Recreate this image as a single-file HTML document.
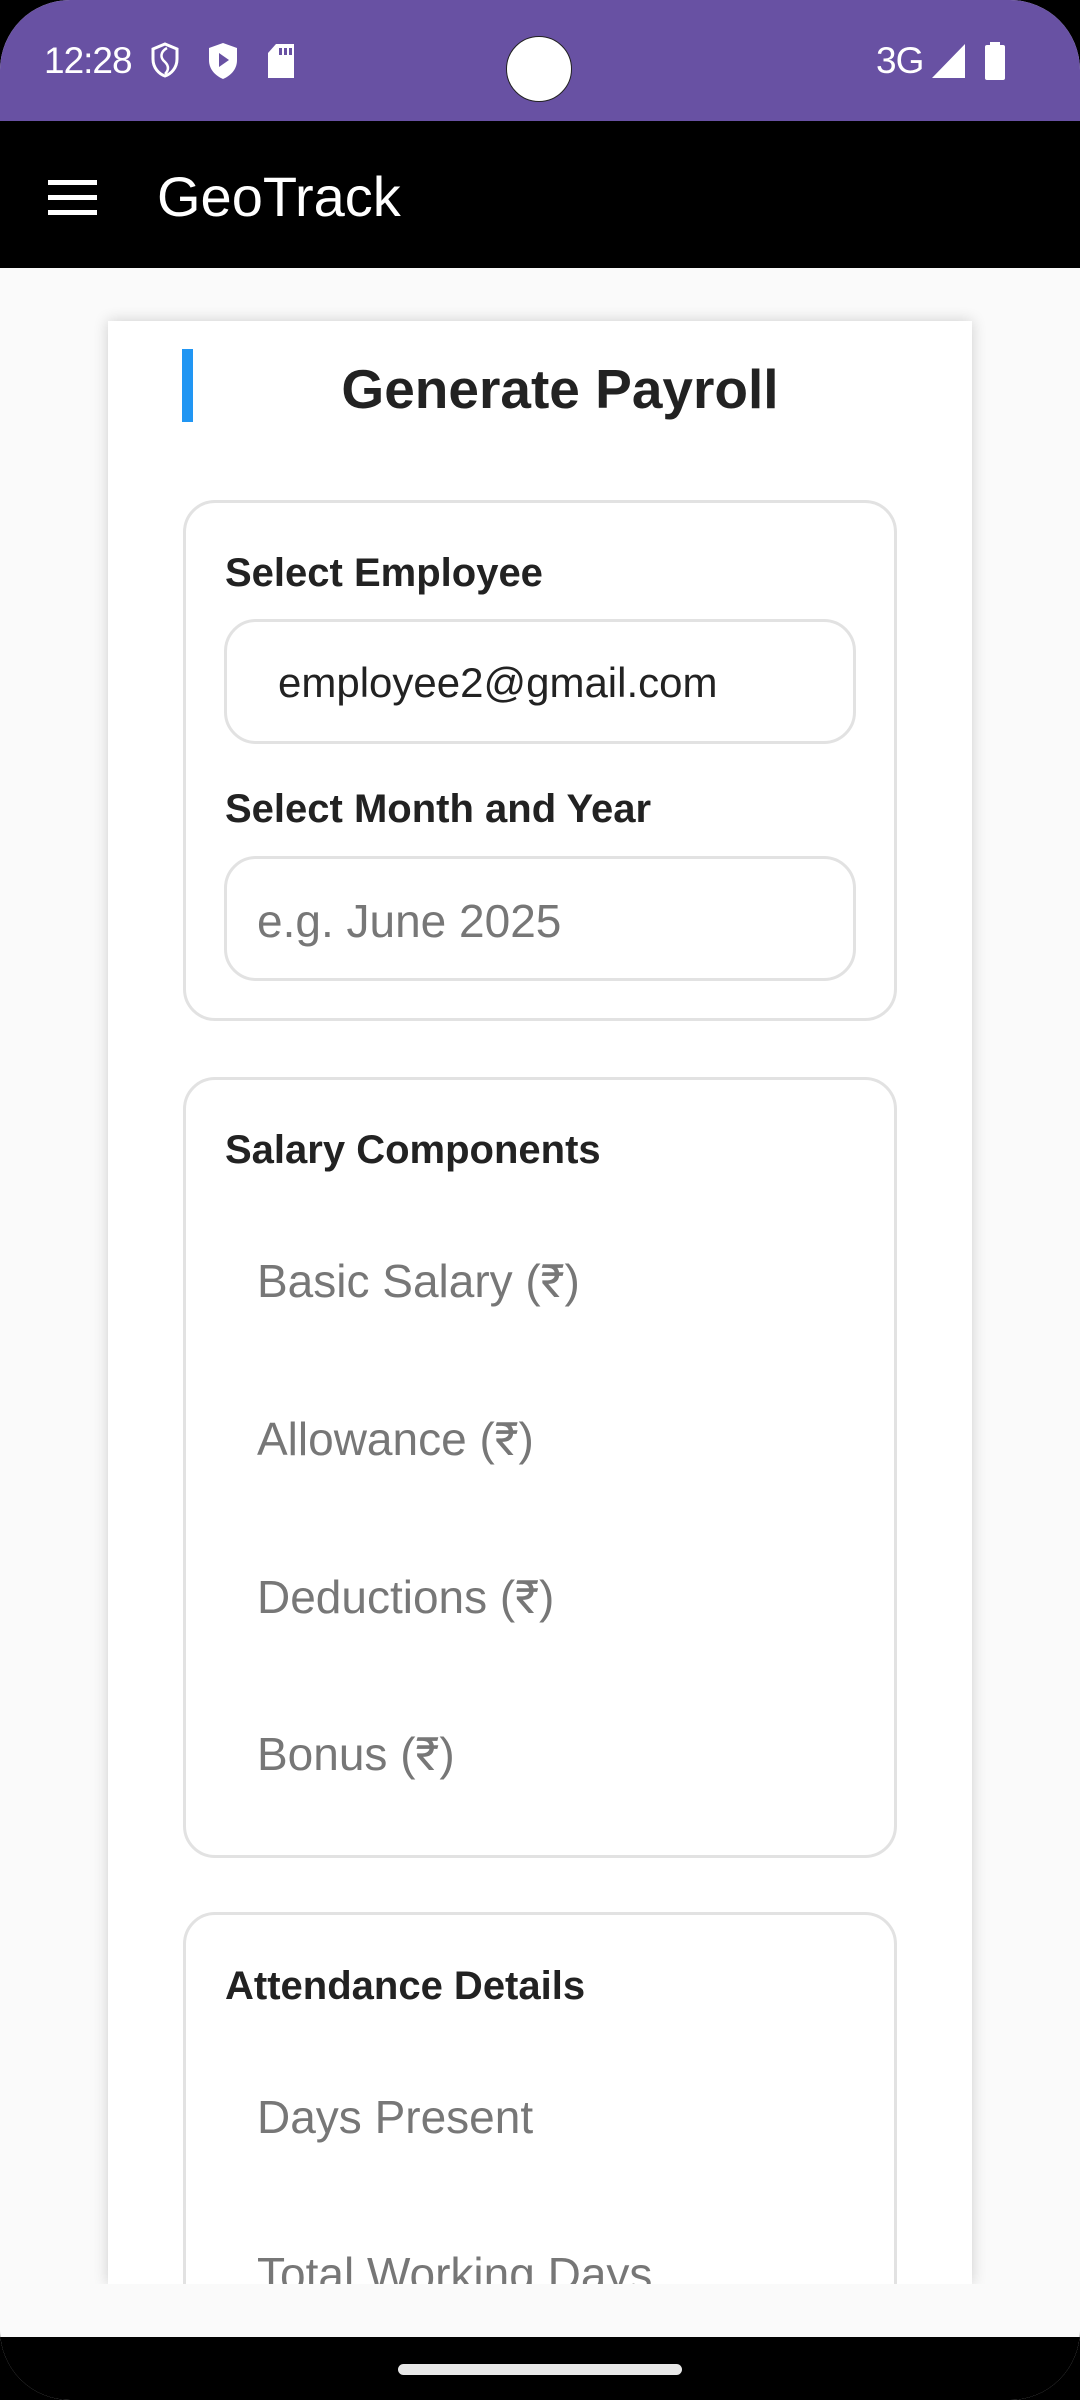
<!DOCTYPE html>
<html><head><meta charset="utf-8"><style>
html,body{margin:0;padding:0;width:1080px;height:2400px;overflow:hidden;background:#000;font-family:"Liberation Sans",Roboto,sans-serif}
.screen{position:absolute;left:0;top:0;width:1080px;height:2400px;background:#fafafa;border-radius:70px 70px 70px 70px;overflow:hidden}
.status{position:absolute;left:0;top:0;width:1080px;height:121px;background:#6851a3;color:#fff}
.time{position:absolute;left:44px;top:40px;font-size:37px;letter-spacing:-1px}
.cam{position:absolute;left:506px;top:36px;width:66px;height:66px;border-radius:50%;background:#fff;border:1px solid #222;box-sizing:border-box}
.bar{position:absolute;left:0;top:121px;width:1080px;height:147px;background:#000;color:#fff}
.bar .t{position:absolute;left:157px;top:43px;font-size:56px}
.ham{position:absolute;left:48px;width:49px;height:5px;background:#fff}
.card{position:absolute;left:108px;top:321px;width:864px;height:1963px;background:#fff;box-shadow:0 0 14px rgba(0,0,0,0.18)}
.blue{position:absolute;left:182px;top:349px;width:11px;height:73px;background:#2196f3}
.title{position:absolute;left:0;width:1080px;top:357px;text-align:center;font-size:55px;font-weight:bold;color:#222;padding-left:40px;box-sizing:border-box}
.sec{position:absolute;left:183px;width:714px;border:3px solid #e2e2e2;border-radius:32px;box-sizing:border-box;background:#fff}
.lbl{position:absolute;left:225px;font-size:40px;font-weight:bold;color:#222}
.inp{position:absolute;left:224px;width:632px;height:125px;border:3px solid #e2e2e2;border-radius:32px;box-sizing:border-box}
.ph{position:absolute;left:257px;font-size:46px;color:#777}
.bottom{position:absolute;left:0;top:2284px;width:1080px;height:53px;background:#fafafa}
.nav{position:absolute;left:0;top:2337px;width:1080px;height:63px;background:#000}
.handle{position:absolute;left:398px;top:2364px;width:284px;height:11px;border-radius:6px;background:#e8e8e8}
</style></head><body>
<div class="screen">
<div class="status">
<div class="time">12:28</div>
<svg style="position:absolute;left:150px;top:42px" width="30" height="36" viewBox="0 0 30 36"><path d="M15 2 L27 7 V17 C27 26 21 32 15 34 C9 32 3 26 3 17 V7 Z" fill="none" stroke="#fff" stroke-width="3"/><path d="M17 6 C10 10 10 16 15 20 C19 24 19 28 15 32" fill="none" stroke="#fff" stroke-width="2.5"/></svg>
<svg style="position:absolute;left:207px;top:42px" width="32" height="38" viewBox="0 0 32 38"><path d="M16 1 L30 6 V18 C30 28 23 34 16 37 C9 34 2 28 2 18 V6 Z" fill="#fff"/><path d="M12 11 L22 18 L12 25 Z" fill="#6851a3"/></svg>
<svg style="position:absolute;left:267px;top:44px" width="28" height="34" viewBox="0 0 28 34"><path d="M9 0 H27 V34 H1 V9 Z" fill="#fff"/><rect x="12" y="4" width="3" height="7" fill="#6851a3"/><rect x="17" y="4" width="3" height="7" fill="#6851a3"/><rect x="22" y="4" width="3" height="7" fill="#6851a3"/></svg>
<div class="cam"></div>
<div style="position:absolute;left:876px;top:40px;font-size:37px;letter-spacing:-1px">3G</div>
<svg style="position:absolute;left:932px;top:44px" width="34" height="34" viewBox="0 0 34 34"><path d="M33 0 V34 H0 Z" fill="#fff"/></svg>
<svg style="position:absolute;left:984px;top:42px" width="22" height="38" viewBox="0 0 22 38"><rect x="6" y="0" width="10" height="4" fill="#fff"/><rect x="1" y="3" width="20" height="35" rx="2" fill="#fff"/></svg>
</div>
<div class="bar">
<div class="ham" style="top:59px"></div><div class="ham" style="top:74px"></div><div class="ham" style="top:89px"></div>
<div class="t">GeoTrack</div>
</div>
<div class="card"></div>
<div class="blue"></div>
<div class="title">Generate Payroll</div>

<div class="sec" style="top:500px;height:521px"></div>
<div class="lbl" style="top:551px">Select Employee</div>
<div class="inp" style="top:619px"></div>
<div style="position:absolute;left:278px;top:659px;font-size:42px;color:#222">employee2@gmail.com</div>
<div class="lbl" style="top:787px">Select Month and Year</div>
<div class="inp" style="top:856px"></div>
<div class="ph" style="top:894px">e.g. June 2025</div>

<div class="sec" style="top:1077px;height:781px"></div>
<div class="lbl" style="top:1128px">Salary Components</div>
<div class="ph" style="top:1254px">Basic Salary (₹)</div>
<div class="ph" style="top:1412px">Allowance (₹)</div>
<div class="ph" style="top:1570px">Deductions (₹)</div>
<div class="ph" style="top:1727px">Bonus (₹)</div>

<div class="sec" style="top:1912px;height:500px"></div>
<div class="lbl" style="top:1964px">Attendance Details</div>
<div class="ph" style="top:2090px">Days Present</div>
<div class="ph" style="top:2247px">Total Working Days</div>

<div class="bottom"></div>
<div class="nav"></div>
<div class="handle"></div>
</div>
</body></html>
